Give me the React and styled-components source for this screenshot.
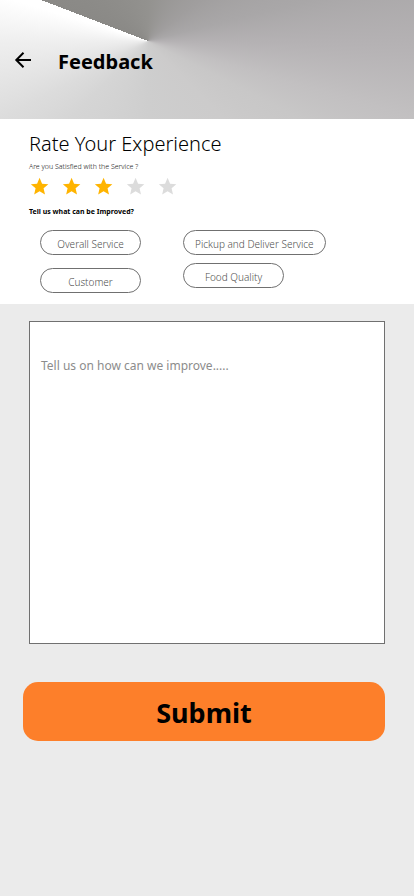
import React, { useState } from "react";
import styled, { createGlobalStyle } from "styled-components";

const GlobalStyle = createGlobalStyle`
  *, *::before, *::after { box-sizing: border-box; }
  body {
    margin: 0;
    background: #ebebeb;
    color: #000;
    font-family: "Segoe UI", "Noto Sans", "Open Sans", sans-serif;
  }
  button, textarea { font-family: inherit; }
`;

const Page = styled.main`
  min-height: 100vh;
  padding-bottom: 32px;
`;

const Header = styled.header`
  display: flex;
  align-items: center;
  gap: 24px;
  height: 119px;
  padding: 2px 12px 0;
  background: conic-gradient(
    from 291deg at 148px 41px,
    #8a8986 0deg,
    #93928f 69deg,
    #a09e9e 121deg,
    #a9a7a8 145deg,
    #b5b2b4 160deg,
    #c2c0c1 175deg,
    #c8c7c7 186deg,
    #cccbcb 205deg,
    #cecece 249deg,
    #d5d5d5 294deg,
    #dcdcdc 311deg,
    #efefef 339deg,
    #ffffff 356deg
  );
`;

const BackButton = styled.button`
  display: flex;
  padding: 0 0 2px;
  border: 0;
  background: none;
  cursor: pointer;
`;

const Title = styled.h1`
  margin: 0;
  padding-top: 2px;
  font-size: 20px;
  line-height: 28px;
  font-weight: 700;
`;

const RatingPanel = styled.section`
  padding: 9px 28px 11px 29px;
  background: #fff;
`;

const Heading = styled.h2`
  margin: 0;
  font-size: 20px;
  line-height: 31px;
  font-weight: 300;
`;

const Question = styled.p`
  margin: 0;
  font-size: 7px;
  line-height: 16px;
  color: ${(p) => (p.$strong ? "#000" : "#111")};
  font-weight: ${(p) => (p.$strong ? 700 : 300)};
`;

const Stars = styled.div`
  display: flex;
  gap: 12px;
  height: 29px;
  padding: 1px 0 0 1px;
`;

const StarButton = styled.button`
  display: flex;
  width: 20px;
  height: 20px;
  padding: 0;
  border: 0;
  background: none;
  color: ${(p) => (p.$on ? "#ffb400" : "#dcdcdc")};
  cursor: pointer;
`;

const Topics = styled.div`
  display: flex;
  gap: 42px;
  padding: 10px 0 0 11px;
`;

const TopicColumn = styled.div`
  display: flex;
  flex-direction: column;
  align-items: flex-start;
  gap: ${(p) => p.$gap}px;
`;

const Chip = styled.button`
  min-width: 101px;
  height: 25px;
  padding: 2px 11px 0;
  border: 1px solid #707070;
  border-radius: 13px;
  background: ${(p) => (p.$on ? "#ececec" : "#fff")};
  color: #505050;
  font-size: 10px;
  font-weight: 300;
  line-height: 20px;
  white-space: nowrap;
  cursor: pointer;
`;

const Form = styled.form`
  display: flex;
  flex-direction: column;
  gap: 38px;
  padding: 17px 29px 0 23px;
`;

const Comments = styled.textarea`
  display: block;
  height: 323px;
  margin-left: 6px;
  padding: 34px 11px;
  border: 1px solid #707070;
  border-radius: 0;
  background: #fff;
  color: #333;
  font-size: 12px;
  line-height: 20px;
  resize: none;
  &::placeholder { color: #8c8c8c; opacity: 1; }
`;

const Submit = styled.button`
  height: 59px;
  padding: 2px 0 0;
  border: 0;
  border-radius: 15px;
  background: #fd7f2a;
  color: #000;
  font-size: 27px;
  line-height: 40px;
  font-weight: 700;
  cursor: pointer;
`;

const columns = [
  { gap: 13, topics: ["Overall Service", "Customer"] },
  { gap: 8, topics: ["Pickup and Deliver Service", "Food Quality"] },
];

const BackArrow = () => (
  <svg width="22" height="22" viewBox="0 0 22 22" fill="none" stroke="#000" strokeWidth="2" aria-hidden="true">
    <path d="M19 11H5M11.5 3.8L4.3 11l7.2 7.2" />
  </svg>
);

const Star = () => (
  <svg width="20" height="20" viewBox="0 0 24 24" fill="currentColor" aria-hidden="true">
    <path d="M11.5 18.2l6.5 4-1.7-7.4 5.7-5-7.5-.6-3-7-3 7-7.5.6 5.7 5L5 22.2z" />
  </svg>
);

export default function App() {
  const [rating, setRating] = useState(3);
  const [selected, setSelected] = useState([]);
  const toggle = (t) =>
    setSelected((s) => (s.includes(t) ? s.filter((x) => x !== t) : [...s, t]));

  return (
    <>
      <GlobalStyle />
      <Page>
        <Header>
          <BackButton type="button" aria-label="Back">
            <BackArrow />
          </BackButton>
          <Title>Feedback</Title>
        </Header>
        <RatingPanel>
          <Heading>Rate Your Experience</Heading>
          <Question>Are you Satisfied with the Service ?</Question>
          <Stars role="group" aria-label="Rating">
            {[1, 2, 3, 4, 5].map((n) => (
              <StarButton
                key={n}
                type="button"
                $on={n <= rating}
                aria-label={`${n} of 5 stars`}
                aria-pressed={n === rating}
                onClick={() => setRating(n)}
              >
                <Star />
              </StarButton>
            ))}
          </Stars>
          <Question $strong>Tell us what can be Improved?</Question>
          <Topics>
            {columns.map((c) => (
              <TopicColumn key={c.gap} $gap={c.gap}>
                {c.topics.map((t) => (
                  <Chip
                    key={t}
                    type="button"
                    $on={selected.includes(t)}
                    aria-pressed={selected.includes(t)}
                    onClick={() => toggle(t)}
                  >
                    {t}
                  </Chip>
                ))}
              </TopicColumn>
            ))}
          </Topics>
        </RatingPanel>
        <Form onSubmit={(e) => e.preventDefault()}>
          <Comments aria-label="Comments" placeholder="Tell us on how can we improve....." />
          <Submit type="submit">Submit</Submit>
        </Form>
      </Page>
    </>
  );
}
